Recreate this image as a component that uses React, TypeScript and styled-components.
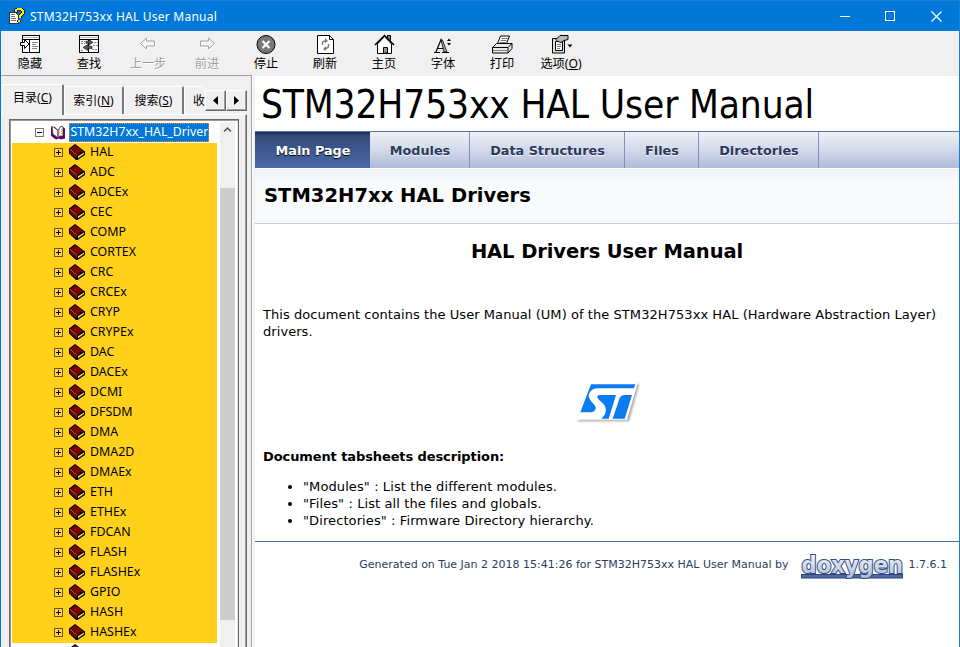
import React from "react";
import styled, { createGlobalStyle, css } from "styled-components";

const ui = `"Noto Sans", "Noto Sans CJK SC", sans-serif`;
const verdana = `"DejaVu Sans", sans-serif`;

const Global = createGlobalStyle`
  * { box-sizing: border-box; }
  body { margin: 0; background: #fff; overflow: hidden; }
  svg { display: block; flex: none; }
`;

const Window = styled.div`
  width: 960px; height: 647px; overflow: hidden;
  display: flex; flex-direction: column;
  border-left: 1px solid #0078d7; border-right: 1px solid #1a7fd0;
  background: #f0f0f0; font-family: ${ui}; color: #000;
`;
const TitleBar = styled.header`
  height: 31px; flex: none; background: #0078d7; border-top: 1px solid #1a80d8;
  margin: 0 -1px; padding: 0 1px 0 9px; display: flex; align-items: center; color: #fff;
`;
const WindowTitle = styled.div`
  flex: 1; margin-left: 5px; font-size: 12px; letter-spacing: 0.23px; white-space: nowrap;
`;
const WindowButton = styled.div`
  width: 45.5px; display: flex; justify-content: center;
`;
const Toolbar = styled.nav`
  height: 45px; flex: none; display: flex; background: #f0f0f0;
`;
const ToolButton = styled.div<{ $disabled?: boolean }>`
  width: 59px; padding-top: 3px; display: flex; flex-direction: column; align-items: center;
  font-size: 12.2px; line-height: 18px; white-space: nowrap;
  ${p => p.$disabled && css`color: #a0a0a0; text-shadow: 1px 1px #fff;`}
  svg { margin-left: -2px; }
  span { margin-left: -1px; }
`;
const Main = styled.div`
  flex: 1; min-height: 0; display: flex;
`;
const Sidebar = styled.aside`
  width: 251px; flex: none; display: flex; flex-direction: column;
  border-top: 1px solid #a0a0a0; border-right: 1px solid #a0a0a0;
  margin-top: -1px; padding: 8px 4px 0 1px;
`;
const Tabs = styled.div`
  height: 30px; flex: none; display: flex; align-items: flex-end; position: relative; z-index: 1;
`;
const Tab = styled.div<{ $w: number; $active?: boolean }>`
  width: ${p => p.$w}px; height: ${p => (p.$active ? 31 : 28)}px; flex: none;
  margin-bottom: ${p => (p.$active ? -1 : 0)}px;
  border-top: 1px solid #fff; border-right: ${p => (p.$w > 30 ? 2 : 0)}px solid #777;
  border-left: 1px solid #fff; border-radius: 2px 2px 0 0; background: #f0f0f0;
  font-size: 12px; line-height: ${p => (p.$active ? 26 : 27)}px; text-align: center;
  white-space: nowrap; overflow: hidden;
`;
const CutTab = styled(Tab)`
  text-align: left; padding-left: 8px;
`;
const SpinButton = styled.div`
  width: 21px; height: 21px; margin-bottom: 3px; display: grid; place-items: center; flex: none;
  border: 1px solid #fff; border-right-color: #696969; border-bottom-color: #696969;
  box-shadow: inset -1px -1px #a0a0a0; background: #f0f0f0;
`;
const TabPage = styled.div`
  flex: 1; min-height: 0; display: flex; border-top: 1px solid #fff;
  border-right: 1px solid #696969; box-shadow: inset -1px 0 #a0a0a0; padding: 4px 7px 0 7px;
`;
const TreeFrame = styled.div`
  flex: 1; min-width: 0; display: flex; background: #fff;
  border: solid #696969; border-width: 1px 1px 0 1px;
  box-shadow: inset 1px 1px #999, inset -1px 0 #e3e3e3; padding: 2px 2px 0 2px;
`;
const Tree = styled.div`
  width: 208px; flex: none; overflow: hidden;
`;
const RootRow = styled.div`
  height: 21px; display: flex; align-items: center; padding-left: 23px;
`;
const Selected = styled.span`
  height: 19px; width: 140px; margin-left: 2px; padding-left: 1.5px; background: #0078d7; color: #fff;
  outline: 1px dotted #ff8728; outline-offset: -1px; font-size: 12.3px; line-height: 18px; white-space: nowrap;
`;
const Topics = styled.div`
  width: 205px; background: #ffd11a;
`;
const TopicRow = styled.div`
  height: 20px; display: flex; align-items: center; padding-left: 42px;
  font-size: 12.4px; line-height: 18px;
  svg { margin-top: -1px; }
  svg:nth-child(2) { margin: -2px 5px 0 6px; }
  span { margin-top: -2px; }
`;
const NextRow = styled.div`
  padding: 1px 0 0 57px;
`;
const ScrollBar = styled.div`
  width: 15px; flex: none; background: #f0f0f0; display: flex; flex-direction: column; align-items: center;
`;
const ScrollThumb = styled.div`
  width: 15px; height: 432px; background: #cdcdcd; margin-top: 56px;
`;
const Splitter = styled.div`
  width: 3px; flex: none; background: #f0f0f0; border-left: 1px solid #fff;
`;
const Content = styled.main`
  flex: 1; min-width: 0; background: #fff; font-family: ${verdana}; font-size: 13px;
`;
const ProjectName = styled.div`
  height: 55px; padding: 1px 0 0 6px;
  font: 38.5px/55px "DejaVu Sans Condensed", "DejaVu Sans", sans-serif; font-stretch: condensed;
  white-space: nowrap; letter-spacing: -0.15px;
`;
const PageTabs = styled.div`
  height: 37px; display: flex; border-top: 1px solid #5373b4;
  background: linear-gradient(#eef1f8, #d5dbea 45%, #aebbda);
`;
const PageTab = styled.div<{ $w: number; $active?: boolean }>`
  width: ${p => p.$w}px; text-align: center; font-size: 12.8px; font-weight: bold; line-height: 37px;
  color: #283a5d; text-shadow: 0 1px 1px #ffffffe6; padding-left: 1px;
  border-right: 1px solid #7e93c4;
  ${p => p.$active && css`
    color: #fff; text-shadow: 0 1px 1px #000; border-right: 0;
    background: linear-gradient(#1c2a44, #354c7b 4px, #3e578e 50%, #4a69ab);
  `}
`;
const Header = styled.div`
  height: 56px; padding-left: 9px; border-bottom: 1px solid #c4cfe5; border-top: 1px solid #fff;
  background: linear-gradient(#eef1f7, #f9fafc 12px);
  font-size: 19.5px; font-weight: bold; line-height: 54px; letter-spacing: 0.04px;
`;
const Contents = styled.div`
  height: 317px; padding: 0 8px;
`;
const Heading = styled.h1`
  margin: 0; padding-top: 15px; text-align: center; font-size: 19.5px; line-height: 26px; letter-spacing: -0.09px;
`;
const Paragraph = styled.p`
  margin: 41px 0 0; line-height: 17px; white-space: nowrap; letter-spacing: 0.063px;
`;
const LogoRow = styled.div`
  display: flex; justify-content: center; height: 60px; margin-top: 30px; padding-left: 5px;
`;
const Subheading = styled.div`
  margin-top: 18px; font-weight: bold; line-height: 17px; letter-spacing: -0.1px;
`;
const List = styled.ul`
  margin: 13px 0 0; padding-left: 40px; line-height: 17px; letter-spacing: 0.1px;
`;
const Footer = styled.footer`
  height: 46px; border-top: 1px solid #4a6aaa; color: #2a3d61; font-size: 11px;
  display: flex; align-items: center; justify-content: flex-end; padding-right: 12px; white-space: nowrap;
  svg { margin: 2px 5px 0 11px; }
`;

const HelpIcon = () => (
  <svg width="16" height="16" viewBox="0 0 16 16" shapeRendering="crispEdges">
    <path d="M0 4h6l3 3v8H0z" fill="#fff" stroke="#333" />
    <path d="M2 6h4M2 8h4M2 10h5M2 12h5" stroke="#777" />
    <path d="M7 5V2l2-1h3l2 2v2l-3 3v2M10 12v2" fill="none" stroke="#222" strokeWidth="4" />
    <path d="M7 4V2l2-1h3l2 2v2l-3 3v2M10 12v2" fill="none" stroke="#ffed00" strokeWidth="2" />
  </svg>
);

const toolIcons: Record<string, React.ReactNode> = {
  hide: <>
    <rect x="4.5" y="1.500" width="17" height="17" fill="#fff" stroke="#000" />
    <path d="M5 3.500h16" stroke="#bbb" /><path d="M4 5.500h18M11.500 6v12" stroke="#000" />
    <path d="M14 8.500h6M14 10.500h4M14 12.500h6M14 14.500h5" stroke="#888" />
    <path d="M2.500 8.500h4v-3l4.500 4.500-4.500 4.500v-3h-4z" fill="#f4f4f4" stroke="#000" />
  </>,
  locate: <>
    <rect x="2.500" y="1.500" width="19" height="17" fill="#fff" stroke="#000" />
    <path d="M3 3.500h18" stroke="#bbb" /><path d="M2 5.500h20M11.500 6v12" stroke="#000" />
    <path d="M4 7.500h4M4 9.500h4M17 8.500h4M16 11.500h5M4 16.500h3M15 15.500h6" stroke="#888" strokeDasharray="2 1" />
    <path d="M9 7.200h3V5.500l4 2.800-4 2.800V9.300H9zM15 12.300h-4v-1.800l-5 3 5 3v-1.900h4z" fill="#555" stroke="#222" strokeWidth=".7" />
  </>,
  back: <><path d="M5.500 10l6-5.500v3.500h8v5h-8v4z" fill="none" stroke="#fff" /><path d="M4.500 9.500l6-5.500v3h8v5h-8v3z" fill="#f5f5f5" stroke="#a0a0a0" /></>,
  forward: <><path d="M20.500 10.500l-6-5.500v3h-8v5.500h8v3z" fill="none" stroke="#fff" /><path d="M19.500 9.500l-6-5.500v3h-8v5h8v3z" fill="#f5f5f5" stroke="#a0a0a0" /></>,
  stop: <><circle cx="12" cy="10.500" r="9" fill="#787878" stroke="#000" /><path d="M8.500 7l7 7M15.500 7l-7 7" stroke="#fff" strokeWidth="2.200" /></>,
  refresh: <><path d="M4.500 1.500h12l4 4v14h-16z" fill="#fff" stroke="#000" /><path d="M16.500 1.500v4h4" fill="none" stroke="#000" /><path d="M9.500 11V9q0-2 4-2M15.500 10v2q0 2-4 3" fill="none" stroke="#777" strokeWidth="1.400" /><path d="M12 4l3 3-3 2zM13 12l-3 3 3 2z" fill="#777" /></>,
  home: <><path d="M15.500 5V1.500h3V8" fill="#888" stroke="#000" /><path d="M5.500 10v9.500h14V10L12.500 2.500z" fill="#fff" stroke="#000" /><path d="M3 11l9.500-9.500L22 11" fill="none" stroke="#000" strokeWidth="1.500" /><path d="M11.500 19v-5.500h4V19z" fill="#999" stroke="#000" /></>,
  font: <><path d="M3 18.500h6M11 18.500h7M5 18L10 5.500l5 12.500M7 14.500h6" fill="none" stroke="#000" strokeWidth="1.200" /><path d="M10 6l3 12h3L11.500 6z" fill="#999" stroke="#000" strokeWidth=".7" /><path d="M18 5l2-2.500L22 5zM18 7l2 2.500L22 7z" transform="translate(-2 2)" fill="#000" /></>,
  print: <><path d="M7.500 9.500l3-7.500h9l-3 7.500z" fill="#fff" stroke="#000" /><path d="M11.500 4.500h6M10.500 6.500h6M9.500 8.500h6" stroke="#777" /><path d="M2.500 13.500l4-4h15.500v5l-4 4.500H2.500z" fill="#e8e8e8" stroke="#000" /><path d="M2.500 13.500h15.500l4-4M18 13.500v5" fill="none" stroke="#000" /><path d="M3 16.500h14.500" stroke="#888" /></>,
  options: <><path d="M3.500 4.500h12v14.500h-12z" fill="#ddd" stroke="#000" /><path d="M6.500 7.500h7v9h-7z" fill="#fff" stroke="#000" /><path d="M8 10.500h4M8 12.500h4M8 14.500h3" stroke="#777" /><path d="M7 5.500l4-4h8v4l-4 1-3 2-3-1z" fill="#bbb" stroke="#000" /><path d="M18.500 10.500h5l-2.500 3z" fill="#000" /></>,
};

const BookIcon = ({ color = "#800000" }: { color?: string }) => (
  <svg width="16" height="16" viewBox="0 0 16 16">
    <path d="M6 0L16 7.500V11L8.500 16H7L0 9.500V4.500z" fill="#000" />
    <path d="M6 1.200L14.300 7L8.500 10.700L1.800 4.800z" fill={color} />
    <path d="M1 6L8 12V14.700L1 9z" fill={color} />
    <path d="M9 12.300L15 8.500V10L9 14.200z" fill="#ffe04a" />
    <path d="M1 5.200L8.200 11.500" stroke="#c9a030" strokeWidth=".8" />
  </svg>
);

const OpenBookIcon = () => (
  <svg width="16" height="15" viewBox="0 0 16 15">
    <path d="M1 1.500l4 .5 3 3 3-4 2 1 2 1.500v10l-4 1-2-1-3 1-3-2-2-2z" fill="#700070" />
    <path d="M2 2h1.500L8 5.500v7.500l-3-2.500-2-1zM8 5.500L11 1l2 1v9l-3 0-2 2z" fill="#fff" stroke="#222" strokeWidth=".7" />
    <path d="M9.500 5.500v5M11.500 4v6" stroke="#cfae20" strokeDasharray="1 1" />
  </svg>
);

const Expander = ({ open }: { open?: boolean }) => (
  <svg width="9" height="9" viewBox="0 0 9 9" shapeRendering="crispEdges">
    <rect x=".5" y=".5" width="8" height="8" fill={open ? "#fff" : "#ffd840"} stroke={open ? "#777" : "#7c4817"} />
    <path d={open ? "M2 4.500h5" : "M2 4.500h5M4.500 2v5"} stroke="#000" />
  </svg>
);

const StLogo = () => (
  <svg width="100" height="60" viewBox="0 0 300 180">
    <defs><filter id="soft" x="-10%" y="-10%" width="130%" height="130%"><feGaussianBlur stdDeviation="3" /></filter></defs>
    <path d="M92 42H238L207 154H52z" fill="#777" opacity=".6" filter="url(#soft)" />
    <path d="M89 37H234L201 149H50z" fill="#fff" />
    <path d="M93 43H226L222 55H113Q89 56 86 76Q85 87 101 102Q111 112 105 121Q101 127 87 127H61z" fill="#0b7bf0" />
    <path d="M116 75H168L146 146H124Q140 133 137 114Q135 104 120 92Q106 80 116 75z" fill="#0b7bf0" />
    <path d="M194 75H216L194 146H158L179 84Q183 75 194 75z" fill="#0b7bf0" />
  </svg>
);

const DoxygenLogo = () => (
  <svg width="104" height="30" viewBox="0 0 104 30">
    <defs><linearGradient id="dox" x1="0" y1="0" x2="0" y2="1"><stop offset="0" stopColor="#fff" /><stop offset="1" stopColor="#a9b9dc" /></linearGradient></defs>
    <rect x="1.500" y="23.500" width="101" height="3.500" fill="#4a6aaa" stroke="#2f4574" strokeWidth="1" />
    <text x="1.500" y="21.500" fontFamily="DejaVu Sans Condensed, DejaVu Sans" fontStretch="condensed" fontWeight="bold" fontSize="23.500" fill="url(#dox)" stroke="#364d7c" strokeWidth="2" paintOrder="stroke">doxygen</text>
  </svg>
);

const tools: [string, React.ReactNode, boolean?][] = [
  ["hide", "隐藏"], ["locate", "查找"], ["back", "上一步", true], ["forward", "前进", true],
  ["stop", "停止"], ["refresh", "刷新"], ["home", "主页"], ["font", "字体"], ["print", "打印"],
  ["options", <>选项(<u>O</u>)</>],
];
const topics = ["HAL", "ADC", "ADCEx", "CEC", "COMP", "CORTEX", "CRC", "CRCEx", "CRYP", "CRYPEx", "DAC", "DACEx", "DCMI", "DFSDM", "DMA", "DMA2D", "DMAEx", "ETH", "ETHEx", "FDCAN", "FLASH", "FLASHEx", "GPIO", "HASH", "HASHEx"];

export default function App() {
  return (
    <>
      <Global />
      <Window>
        <TitleBar>
          <HelpIcon />
          <WindowTitle>STM32H753xx HAL User Manual</WindowTitle>
          <WindowButton><svg width="11" height="11"><path d="M0 5.500h10" stroke="#fff" /></svg></WindowButton>
          <WindowButton><svg width="11" height="11"><rect x=".5" y=".5" width="9" height="9" fill="none" stroke="#fff" /></svg></WindowButton>
          <WindowButton><svg width="11" height="11"><path d="M.5.5l10 10M10.500.5l-10 10" stroke="#fff" strokeWidth="1.200" /></svg></WindowButton>
        </TitleBar>
        <Toolbar>
          {tools.map(([icon, label, disabled]) => (
            <ToolButton key={icon} $disabled={disabled}>
              <svg width="24" height="21" viewBox="0 0 24 21">{toolIcons[icon]}</svg>
              <span>{label}</span>
            </ToolButton>
          ))}
        </Toolbar>
        <Main>
          <Sidebar>
            <Tabs>
              <Tab $w={62} $active>目录(<u>C</u>)</Tab>
              <Tab $w={60}>索引(<u>N</u>)</Tab>
              <Tab $w={60}>搜索(<u>S</u>)</Tab>
              <CutTab $w={21}>收</CutTab>
              <SpinButton><svg width="5" height="9"><path d="M5 0v9L0 4.500z" /></svg></SpinButton>
              <SpinButton><svg width="5" height="9"><path d="M0 0v9l5-4.500z" /></svg></SpinButton>
            </Tabs>
            <TabPage>
              <TreeFrame>
                <Tree>
                  <RootRow>
                    <Expander open />
                    <svg width="6" height="1" />
                    <OpenBookIcon />
                    <svg width="1" height="1" />
                    <Selected>STM32H7xx_HAL_Driver</Selected>
                  </RootRow>
                  <Topics>
                    {topics.map(t => <TopicRow key={t}><Expander /><BookIcon /><span>{t}</span></TopicRow>)}
                  </Topics>
                  <NextRow><BookIcon color="#800080" /></NextRow>
                </Tree>
                <ScrollBar>
                  <svg width="9" height="10" viewBox="0 0 9 10"><path d="M1 9.500L4.500 6L8 9.500" fill="none" stroke="#505050" strokeWidth="1.500" /></svg>
                  <ScrollThumb />
                </ScrollBar>
              </TreeFrame>
            </TabPage>
          </Sidebar>
          <Splitter />
          <Content>
            <ProjectName>STM32H753xx HAL User Manual</ProjectName>
            <PageTabs>
              <PageTab $w={115} $active>Main Page</PageTab>
              <PageTab $w={100}>Modules</PageTab>
              <PageTab $w={155}>Data Structures</PageTab>
              <PageTab $w={74}>Files</PageTab>
              <PageTab $w={120}>Directories</PageTab>
            </PageTabs>
            <Header>STM32H7xx HAL Drivers</Header>
            <Contents>
              <Heading>HAL Drivers User Manual</Heading>
              <Paragraph>This document contains the User Manual (UM) of the STM32H753xx HAL (Hardware Abstraction Layer)<br />drivers.</Paragraph>
              <LogoRow><StLogo /></LogoRow>
              <Subheading>Document tabsheets description:</Subheading>
              <List>
                <li>"Modules" : List the different modules.</li>
                <li>"Files" : List all the files and globals.</li>
                <li>"Directories" : Firmware Directory hierarchy.</li>
              </List>
            </Contents>
            <Footer>
              <span>Generated on Tue Jan 2 2018 15:41:26 for STM32H753xx HAL User Manual by</span>
              <DoxygenLogo />
              <span>1.7.6.1</span>
            </Footer>
          </Content>
        </Main>
      </Window>
    </>
  );
}
